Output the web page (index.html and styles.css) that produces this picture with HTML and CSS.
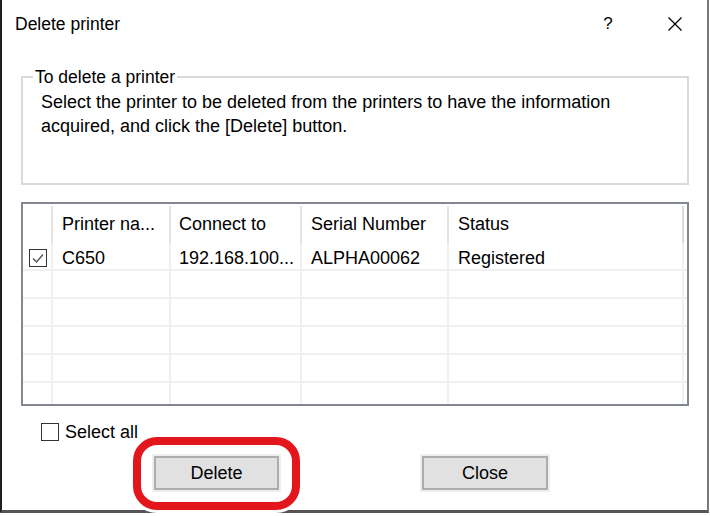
FILE: index.html
```html
<!DOCTYPE html>
<html>
    <head>
        <meta charset="utf-8">
        <title>Delete printer</title>
        <link rel="stylesheet" href="styles.css">
    </head>
    <body>
        <div class="window">
            <div class="titlebar">
                <span class="title">Delete printer</span>
                <span class="help">?</span>
                <span class="close-x">
                    <svg width="16" height="16" viewBox="0 0 16 16"><path d="M1.5 1.5 L14.5 14.5 M14.5 1.5 L1.5 14.5" stroke="#000" stroke-width="1.3" fill="none"/></svg>
                </span>
            </div>

            <div class="content">
                <fieldset class="group">
                    <legend>To delete a printer</legend>
                    <p>Select the printer to be deleted from the printers to have the information<br>acquired, and click the [Delete] button.</p>
                </fieldset>

                <div class="list">
                    <div class="row head">
                        <span class="cell"></span>
                        <span class="cell">Printer na...</span>
                        <span class="cell">Connect to</span>
                        <span class="cell">Serial Number</span>
                        <span class="cell last">Status</span>
                        <span class="cell end"></span>
                    </div>
                    <div class="row">
                        <span class="cell check">
                            <span class="box">
                                <svg width="16" height="16" viewBox="0 0 16 16"><path d="M3 8.5 L6.5 12 L13 4.5" stroke="#555" stroke-width="1.4" fill="none"/></svg>
                            </span>
                        </span>
                        <span class="cell">C650</span>
                        <span class="cell">192.168.100...</span>
                        <span class="cell">ALPHA00062</span>
                        <span class="cell">Registered</span>
                        <span class="cell end"></span>
                    </div>
                    <div class="row"><span class="cell"></span><span class="cell"></span><span class="cell"></span><span class="cell"></span><span class="cell"></span><span class="cell end"></span></div>
                    <div class="row"><span class="cell"></span><span class="cell"></span><span class="cell"></span><span class="cell"></span><span class="cell"></span><span class="cell end"></span></div>
                    <div class="row"><span class="cell"></span><span class="cell"></span><span class="cell"></span><span class="cell"></span><span class="cell"></span><span class="cell end"></span></div>
                    <div class="row"><span class="cell"></span><span class="cell"></span><span class="cell"></span><span class="cell"></span><span class="cell"></span><span class="cell end"></span></div>
                    <div class="row"><span class="cell"></span><span class="cell"></span><span class="cell"></span><span class="cell"></span><span class="cell"></span><span class="cell end"></span></div>
                </div>

                <label class="select-all"><span class="box"></span>Select all</label>

                <div class="buttons">
                    <button class="btn delete">Delete</button>
                    <button class="btn close">Close</button>
                </div>
            </div>

            <div class="callout"></div>
        </div>
    </body>
</html>
```

FILE: styles.css
```css
body {
    margin: 0; padding: 0;
    background: #FFFFFF;
    color: #000000;
    font-family: "Liberation Sans", Arial, sans-serif;
    font-size: 18px;
}

.window {
    position: relative;
    box-sizing: border-box;
    width: 709px;
    height: 513px;
    background: #FFFFFF;
    border-left: 2px solid #1E1E1E;
    border-right: 2px solid #7A7A7A;
    border-bottom: 3px solid #555555;
}

.titlebar {
    display: flex;
    align-items: center;
    height: 48px;
    padding-right: 18px;
}
.title {
    padding-left: 13px;
    font-size: 17.5px;
}
.help {
    margin-left: auto;
    width: 20px;
    text-align: center;
    font-size: 17px;
}
.close-x {
    display: flex;
    justify-content: center;
    width: 28px;
    margin-left: 43px;
}

.content {
    padding: 19px 18px 0 19px;
}

.group {
    margin: 0;
    border: 2px solid #DADADA;
    padding: 3px 18px 45px 18px;
}
.group legend {
    margin-left: -8px;
    padding: 0 2px;
    font-size: 17.5px;
    line-height: 20px;
}
.group p {
    margin: 0;
    line-height: 24px;
}

.list {
    box-sizing: border-box;
    height: 204px;
    margin-top: 17px;
    border: 2px solid #828790;
    overflow: hidden;
}
.row {
    display: grid;
    grid-template-columns: 30px 118px 131px 147px 235px 3px;
    height: 28px;
}
.cell {
    box-sizing: border-box;
    display: flex;
    align-items: center;
    padding: 4px 0 0 9px;
    border-right: 2px solid #F0F0F0;
    border-bottom: 2px solid #F0F0F0;
    white-space: nowrap;
}
.cell:nth-child(3) { padding-left: 8px; }
.cell.end { border-right: none; padding: 0; }
.cell.check { padding-left: 6px; }

.row.head {
    height: 37px;
    padding-top: 2px;
}
.row.head .cell {
    padding-top: 0;
    border-bottom: none;
    border-right-color: #E3E3E3;
}
.row.head .cell.last { border-right-color: #DADADA; }
.row.head .cell.end { border-right: none; }

.box {
    box-sizing: border-box;
    display: flex;
    align-items: center;
    justify-content: center;
    width: 18px;
    height: 18px;
    border: 1px solid #333333;
    background: #FFFFFF;
}

.select-all {
    display: flex;
    align-items: center;
    gap: 6px;
    margin: 17px 0 0 20px;
    line-height: 18px;
}

.buttons {
    display: flex;
    margin-top: 15px;
}
.btn {
    box-sizing: border-box;
    height: 34px;
    border: 2px solid #ADADAD;
    background: #E1E1E1;
    box-shadow: 0 0 0 2px #EEEEEE;
    font-family: "Liberation Sans", Arial, sans-serif;
    font-size: 18px;
    color: #000000;
    padding: 0;
}
.btn.delete { width: 125px; margin-left: 133px; }
.btn.close { width: 126px; margin-left: 143px; }

.callout {
    position: absolute;
    left: 131px;
    top: 437px;
    box-sizing: border-box;
    width: 167px;
    height: 73px;
    border: 8px solid #E3161C;
    border-radius: 24px;
    box-shadow: 0 0 0 3px #FFFFFF;
    pointer-events: none;
}
```
